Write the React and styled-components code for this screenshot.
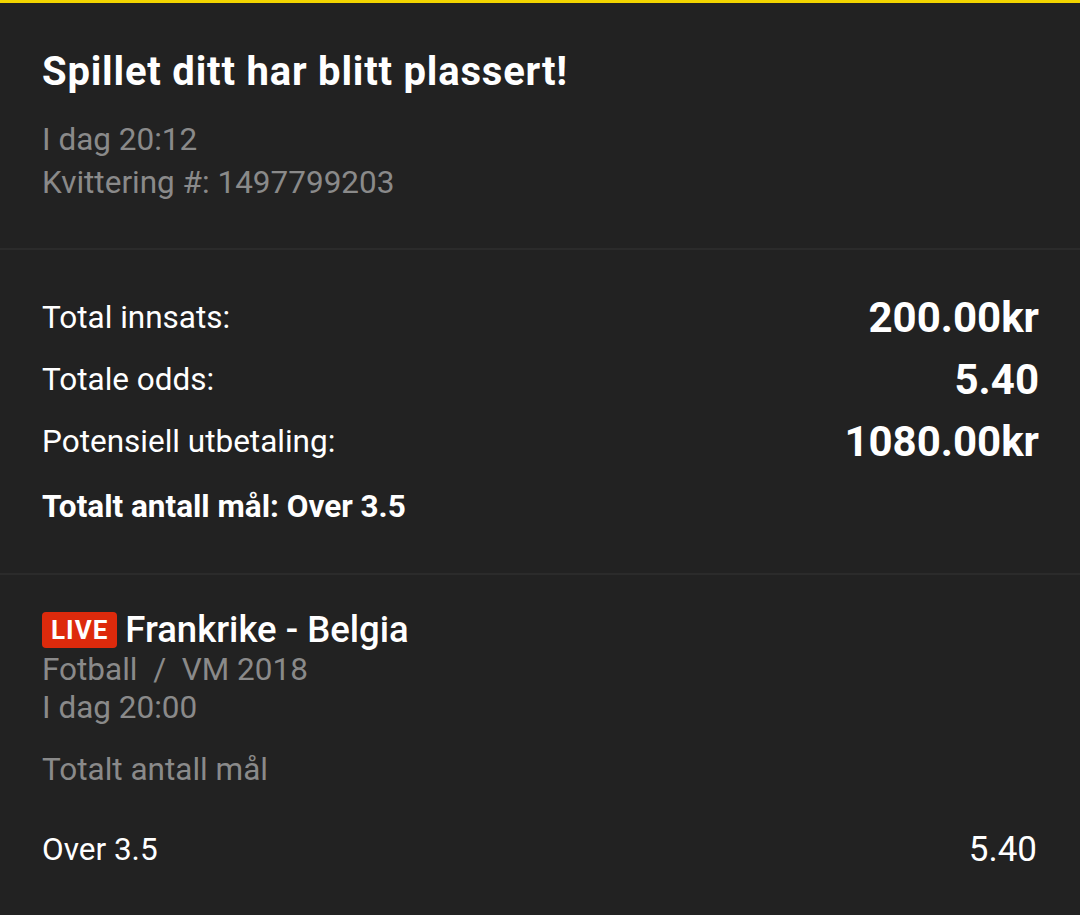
import React from 'react';
import styled, { createGlobalStyle } from "styled-components";

const GlobalStyle = createGlobalStyle`
	html, body {
		margin: 0;
		padding: 0;
		background: #222222;
	}
	body {
		font-family: Roboto, "Noto Sans", sans-serif;
		color: #ffffff;
	}
`;

const summary = [
	{ label: 'Total innsats:', value: '200.00kr' },
	{ label: 'Totale odds:', value: '5.40' },
	{ label: 'Potensiell utbetaling:', value: '1080.00kr' },
];

function App() {
	return (
		<Page>
			<GlobalStyle />
			<Section className='head'>
				<Title>Spillet ditt har blitt plassert!</Title>
				<Meta>
					<div>I dag 20:12</div>
					<div>Kvittering #: 1497799203</div>
				</Meta>
			</Section>
			<Section className='summary'>
				{summary.map((row) => (
					<Row key={row.label}>
						<Label>{row.label}</Label>
						<Amount>{row.value}</Amount>
					</Row>
				))}
				<Market>Totalt antall mål: Over 3.5</Market>
			</Section>
			<Section className='event'>
				<EventTitle>
					<Live>LIVE</Live>
					Frankrike - Belgia
				</EventTitle>
				<Gray>Fotball&nbsp; / &nbsp;VM 2018</Gray>
				<Gray>I dag 20:00</Gray>
				<Gray className='market'>Totalt antall mål</Gray>
				<Selection>
					<span>Over 3.5</span>
					<Odds>5.40</Odds>
				</Selection>
			</Section>
		</Page>
	);
}

const Page = styled.div`
	width: 1080px;
	min-height: 915px;
	background: #222222;
	border-top: 3px solid #f2d500;
	box-sizing: border-box;
`;

const Section = styled.section`
	padding: 0 41px 0 42px;
	border-bottom: 2px solid #2b2b2b;

	&.head {
		padding-top: 47px;
		padding-bottom: 44px;
	}
	&.summary {
		padding-top: 36px;
		padding-bottom: 35px;
	}
	&.event {
		padding-top: 34px;
		border-bottom: none;
	}
`;

const Title = styled.h1`
	margin: 0 0 24px;
	font-size: 40px;
	line-height: 44px;
	font-weight: 700;
	letter-spacing: 0.8px;
	color: #ffffff;
`;

const Meta = styled.div`
	font-size: 31.5px;
	line-height: 43px;
	color: #8a8a8a;
`;

const Row = styled.div`
	display: flex;
	justify-content: space-between;
	align-items: center;
	height: 62px;
`;

const Label = styled.span`
	font-size: 31.5px;
	color: #ffffff;
`;

const Amount = styled.span`
	font-size: 42px;
	font-weight: 700;
	color: #ffffff;
`;

const Market = styled.div`
	margin-top: 4px;
	font-size: 31.5px;
	line-height: 62px;
	font-weight: 700;
`;

const EventTitle = styled.div`
	display: flex;
	align-items: center;
	gap: 8px;
	font-size: 36.5px;
	line-height: 42px;
	font-weight: 500;
`;

const Live = styled.span`
	display: inline-block;
	background: #dd2a0c;
	color: #ffffff;
	font-size: 26px;
	font-weight: 700;
	line-height: 36px;
	padding: 0 9px;
	border-radius: 4px;
	letter-spacing: 1px;
`;

const Gray = styled.div`
	font-size: 31.5px;
	line-height: 38px;
	color: #8a8a8a;

	&.market {
		margin-top: 24px;
	}
`;

const Selection = styled.div`
	display: flex;
	justify-content: space-between;
	align-items: center;
	margin-top: 41px;
	font-size: 31.5px;
	line-height: 40px;
`;

const Odds = styled.span`
	font-size: 35px;
	margin-right: 2px;
`;

export default App;
